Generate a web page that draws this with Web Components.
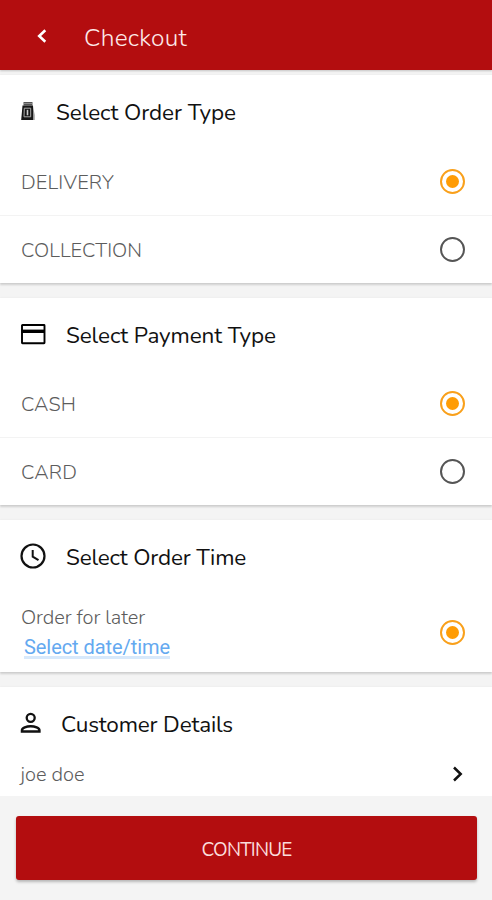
<!DOCTYPE html>
<html lang="en">
<head>
<meta charset="utf-8">
<title>Checkout</title>
<style>
body { margin: 0; background: #f4f4f4; }
</style>
</head>
<body>
<checkout-page></checkout-page>
<script>
const define = (name, html, init) => customElements.define(name, class extends HTMLElement {
  connectedCallback() {
    if (this.shadowRoot) return;
    const root = this.attachShadow({ mode: 'open' });
    const t = document.createElement('template');
    t.innerHTML = html;
    root.append(t.content.cloneNode(true));
    if (init) init(this, root);
  }
});

// A single line of text whose tracking is adjusted to a given width.
define('text-line', `<style>
:host { display: block; white-space: nowrap; flex: none; }
span { display: inline-block; }
</style><span><slot></slot></span>`, (el, root) => {
  const span = root.querySelector('span');
  const want = Number(el.getAttribute('width'));
  const n = el.textContent.length;
  if (want && n) span.style.letterSpacing = (want - span.getBoundingClientRect().width) / n + 'px';
});

const icons = {
  back: [12, 16, '<path d="M9.3 2.2 3.2 8l6.1 5.8" fill="none" stroke="#fff" stroke-width="2.6"/>'],
  next: [12, 16, '<path d="M2 1.5 8.700 8 2 14.500" fill="none" stroke="#111" stroke-width="2.500"/>'],
  bag: [16, 20, '<path d="M3.500 1h9v3.500h-9z" fill="#555"/><path d="M4 2.500h8" stroke="#999" stroke-width=".8"/><path d="M2.500 4.500H13V19H1.200z" fill="#161616"/><path d="M13 5l1.700 9v5H13z" fill="#999"/><path d="M4.300 7.200h6.400v8.600H4z" fill="none" stroke="#aaa" stroke-width="1"/><path d="M7.500 8.800v5.500" stroke="#ccc" stroke-width="1.600"/>'],
  card: [26, 22, '<rect x="2" y="2" width="22.500" height="18.300" rx=".5" fill="none" stroke="#000" stroke-width="1.900"/><path d="M1.500 8.300h23.500" stroke="#000" stroke-width="3.400"/>'],
  clock: [26, 26, '<circle cx="13" cy="13" r="11.500" fill="none" stroke="#111" stroke-width="2.200"/><path d="M12.700 7v6.700l5.800 3.500" fill="none" stroke="#111" stroke-width="2"/>'],
  user: [22, 22, '<circle cx="10.700" cy="5.800" r="4" fill="none" stroke="#111" stroke-width="2.300"/><path d="M2 19.500v-1.200c0-2.200 4.500-4 8.700-4s8.700 1.800 8.700 4v1.200z" fill="none" stroke="#111" stroke-width="2.500"/>']
};
define('ui-icon', `<style>:host { display: block; flex: none; } svg { display: block; }</style>`, (el, root) => {
  const [w, h, d] = icons[el.getAttribute('name')];
  root.innerHTML += `<svg width="${w}" height="${h}" viewBox="0 0 ${w} ${h}">${d}</svg>`;
});

define('radio-mark', `<style>
:host { display: grid; place-items: center; box-sizing: border-box; flex: none; width: 25px; height: 25px; border: 2px solid #555; border-radius: 50%; }
:host([checked]) { border-color: #f9a01b; }
i { display: none; width: 13px; height: 13px; border-radius: 50%; background: #ff9c04; }
:host([checked]) i { display: block; }
</style><i></i>`);

define('app-bar', `<style>
:host { display: flex; align-items: center; box-sizing: border-box; height: 70px; padding: 6px 0 0 36px; background: #b30d0f; color: #fde9e9; font: 350 24.500px/34px Nunito, "Noto Sans", sans-serif; box-shadow: 0 1px 2px rgba(0,0,0,.2); }
ui-icon { margin: -5px 36px 0 0; }
</style><ui-icon name="back"></ui-icon><slot></slot>`);

define('section-card', `<style>
:host { display: block; background: #fff; box-shadow: 0 2px 2px rgba(0,0,0,.15), 0 0 2px rgba(0,0,0,.06); overflow: hidden; }
header { display: flex; align-items: center; box-sizing: border-box; height: 72px; padding: 3px 0 0 20px; color: #111; font: 400 22.500px/32px Nunito, "Noto Sans", sans-serif; }
header ui-icon { margin-top: -3px; }
</style><header></header><slot></slot>`, (el, root) => {
  const icon = document.createElement('ui-icon');
  icon.setAttribute('name', el.getAttribute('icon'));
  const line = document.createElement('text-line');
  line.setAttribute('width', el.getAttribute('title-width'));
  line.textContent = el.getAttribute('heading');
  line.style.marginLeft = el.getAttribute('gap') + 'px';
  root.querySelector('header').append(icon, line);
});

define('option-row', `<style>
:host { display: flex; align-items: center; justify-content: space-between; box-sizing: border-box; height: 68px; padding: 0 27px 0 21px; color: #5c5c5c; font: 300 20px/28px Nunito, "Noto Sans", sans-serif; }
:host([divided]) { border-bottom: 1px solid #f3f3f3; }
::slotted(text-line) { padding-top: 3px; }
</style><slot></slot><slot name="end"></slot>`);

define('primary-button', `<style>
:host { display: block; }
button { all: unset; display: flex; align-items: center; justify-content: center; box-sizing: border-box; width: 461px; height: 64px; padding-top: 3px; border-radius: 3px; background: #b30d0f; color: #fbdcdc; font: 400 19px/28px Nunito, "Noto Sans", sans-serif; box-shadow: 0 2px 3px rgba(0,0,0,.25); }
</style><button><slot></slot></button>`);

define('checkout-page', `<style>
:host { display: flex; flex-direction: column; height: 900px; overflow: hidden; background: #f4f4f4; }
main { display: flex; flex-direction: column; flex: none; gap: 15px; height: 721px; padding-top: 5px; overflow: hidden; }
section-card { flex: none; }
.one { height: 208px; } .two { height: 207px; } .three { height: 152px; } .four { height: 109px; }
.first { height: 69px; }
.second { height: 66px; }
.later { height: 70px; margin-top: 5px; }
.stack { display: grid; gap: 4px; margin-top: -2px; }
.link { margin-left: 3px; color: #64a9f0; font: 400 20px/23px Roboto, sans-serif; border-bottom: 3px solid #d8e9fb; height: 20px; }
.person { height: 34px; margin-top: -2px; padding: 0 28px 0 20.500px; }
.person text-line { padding-top: 2px; }
app-bar { flex: none; position: relative; }
footer { padding: 20px 0 0 16px; }
</style>
<app-bar><text-line width="103">Checkout</text-line></app-bar>
<main>
<section-card class="one" icon="bag" heading="Select Order Type" title-width="180" gap="20">
<option-row class="first" divided><text-line width="93">DELIVERY</text-line><radio-mark slot="end" checked></radio-mark></option-row>
<option-row class="second"><text-line width="121">COLLECTION</text-line><radio-mark slot="end"></radio-mark></option-row>
</section-card>
<section-card class="two" icon="card" heading="Select Payment Type" title-width="210" gap="20">
<option-row divided><text-line width="55">CASH</text-line><radio-mark slot="end" checked></radio-mark></option-row>
<option-row class="second"><text-line width="56">CARD</text-line><radio-mark slot="end"></radio-mark></option-row>
</section-card>
<section-card class="three" icon="clock" heading="Select Order Time" title-width="180" gap="20">
<option-row class="later"><div class="stack"><text-line width="124">Order for later</text-line><text-line class="link" width="146">Select date/time</text-line></div><radio-mark slot="end" checked></radio-mark></option-row>
</section-card>
<section-card class="four" icon="user" heading="Customer Details" title-width="172" gap="19">
<option-row class="person"><text-line width="64">joe doe</text-line><ui-icon slot="end" name="next"></ui-icon></option-row>
</section-card>
</main>
<footer><primary-button><text-line width="90">CONTINUE</text-line></primary-button></footer>`);
</script>
</body>
</html>
